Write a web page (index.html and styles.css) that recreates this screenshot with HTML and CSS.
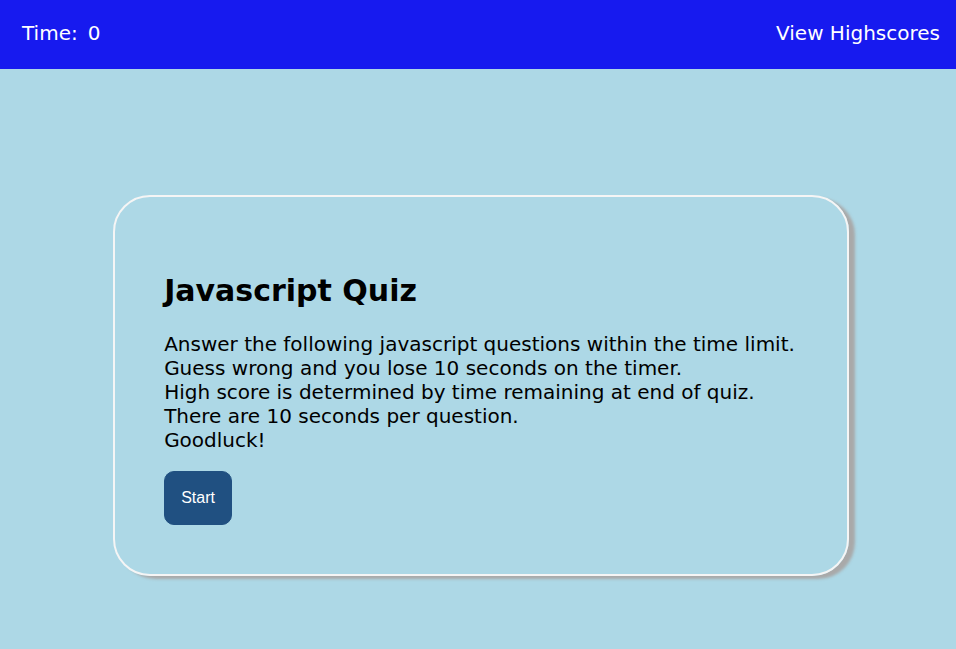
FILE: index.html
```html
<!DOCTYPE html>
<html lang="en">
<head>
<meta charset="utf-8">
<title>Javascript Quiz</title>
<link rel="stylesheet" href="styles.css">
</head>
<body>
<header class="topbar">
<p class="timer">Time: <span>0</span></p>
<a class="scores" href="#">View Highscores</a>
</header>
<main class="stage">
<section class="card">
<h1 class="title">Javascript Quiz</h1>
<p class="rules">Answer the following javascript questions within the time limit.<br>
Guess wrong and you lose 10 seconds on the timer.<br>
High score is determined by time remaining at end of quiz.<br>
There are 10 seconds per question.<br>
Goodluck!</p>
<button class="start" type="button">Start</button>
</section>
</main>
</body>
</html>
```
FILE: styles.css
```css
* {
  box-sizing: border-box;
}

body {
  margin: 0;
  background: #add8e6;
  color: #000;
  font-family: Verdana, "DejaVu Sans", sans-serif;
  font-size: 20px;
  line-height: 24px;
}

.topbar {
  display: flex;
  justify-content: space-between;
  padding: 21px 16px 24px 22px;
  background: #171aef;
  color: #fff;
}

.timer {
  display: flex;
  gap: 10px;
  margin: 0;
}

.scores {
  color: inherit;
  text-decoration: none;
}

.stage {
  display: flex;
  justify-content: center;
  padding: 126px 16px 72px 22px;
}

.card {
  padding: 76px 52px 49px 49px;
  border: 2px solid #f5f5f5;
  border-radius: 37px;
  box-shadow: 6px 3px 3px #a9a9a9;
}

.title {
  margin: 0 0 23px;
  font-size: 30px;
  line-height: 36px;
}

.rules {
  margin: 0 0 19px;
}

.start {
  display: block;
  padding: 16px;
  border: 1px solid #205081;
  border-radius: 10px;
  background: #205081;
  color: #fff;
  font-family: Arial, "Liberation Sans", sans-serif;
  font-size: 16px;
  line-height: 20px;
}
```
